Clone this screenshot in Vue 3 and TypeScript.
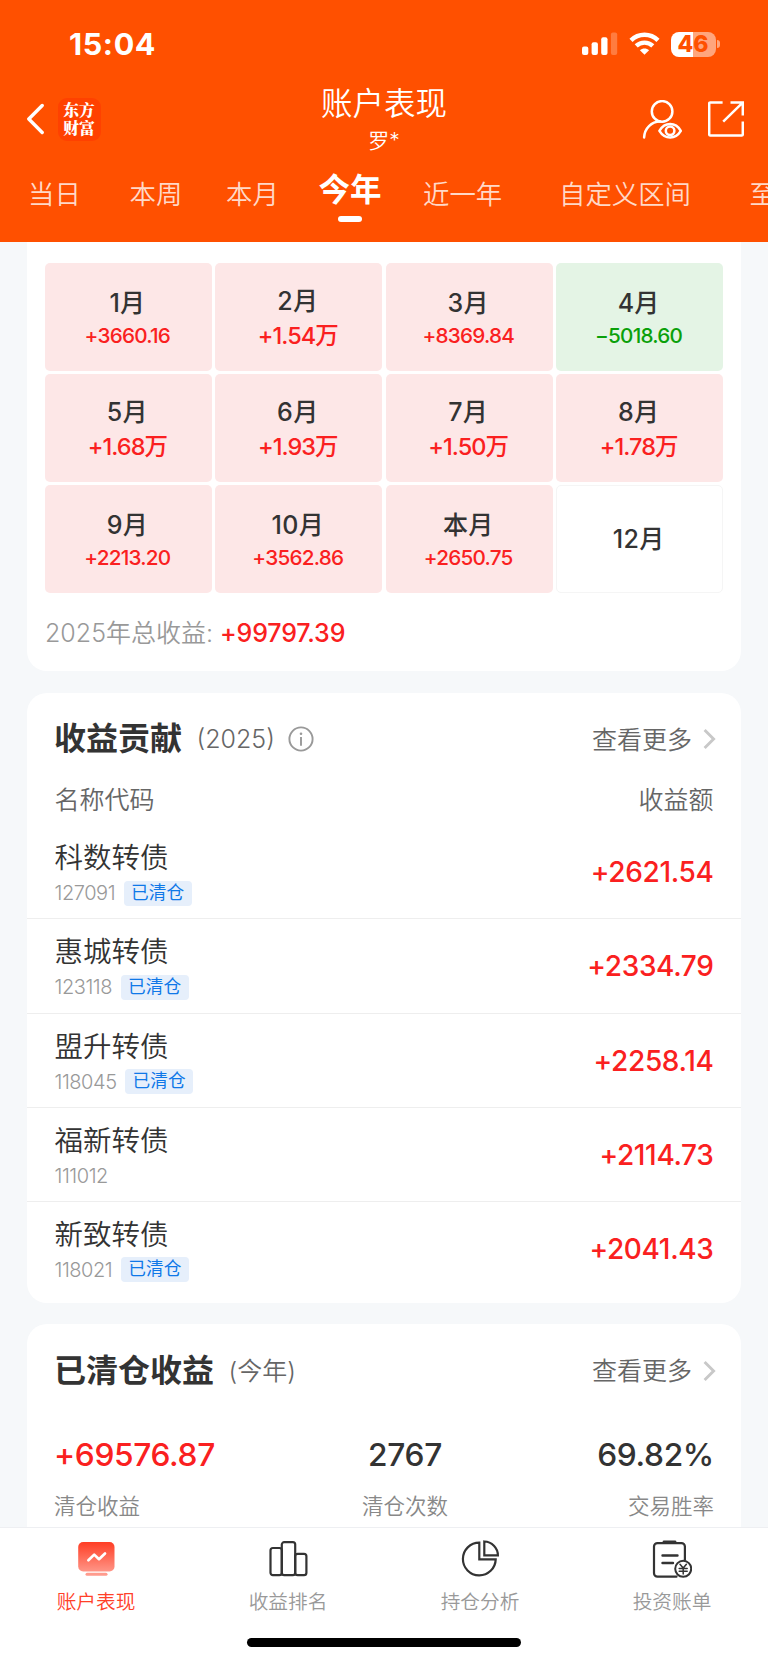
<script setup lang="ts">
interface Month { name: string; value?: string; tone: 'up' | 'down' | 'none'; large?: boolean }
interface Bond { name: string; code: string; cleared: boolean; gain: string }

const periods = ['当日', '本周', '本月', '今年', '近一年', '自定义区间', '至今']
const activePeriod = '今年'

const months: Month[] = [
  { name: '1月', value: '+3660.16', tone: 'up' },
  { name: '2月', value: '+1.54万', tone: 'up', large: true },
  { name: '3月', value: '+8369.84', tone: 'up' },
  { name: '4月', value: '−5018.60', tone: 'down' },
  { name: '5月', value: '+1.68万', tone: 'up', large: true },
  { name: '6月', value: '+1.93万', tone: 'up', large: true },
  { name: '7月', value: '+1.50万', tone: 'up', large: true },
  { name: '8月', value: '+1.78万', tone: 'up', large: true },
  { name: '9月', value: '+2213.20', tone: 'up' },
  { name: '10月', value: '+3562.86', tone: 'up' },
  { name: '本月', value: '+2650.75', tone: 'up' },
  { name: '12月', tone: 'none' },
]

const bonds: Bond[] = [
  { name: '科数转债', code: '127091', cleared: true, gain: '+2621.54' },
  { name: '惠城转债', code: '123118', cleared: true, gain: '+2334.79' },
  { name: '盟升转债', code: '118045', cleared: true, gain: '+2258.14' },
  { name: '福新转债', code: '111012', cleared: false, gain: '+2114.73' },
  { name: '新致转债', code: '118021', cleared: true, gain: '+2041.43' },
]
</script>

<template>
  <div class="screen">
    <header class="top">
      <div class="status">
        <span class="clock">15:04</span>
        <div class="signals">
          <svg width="36" height="24" viewBox="0 0 36 24" fill="#fff">
            <rect x="0" y="14.5" width="6.3" height="8.5" rx="2" />
            <rect x="9.6" y="10.3" width="6.3" height="12.7" rx="2" />
            <rect x="19.2" y="5.2" width="6.3" height="17.8" rx="2" />
            <rect x="28.9" y="0.6" width="6.3" height="22.4" rx="2" opacity="0.25" />
          </svg>
          <svg class="wifi" width="31" height="24" viewBox="0 0 31 24" fill="none" stroke="#fff" stroke-width="4.4">
            <path d="M2 8.4C9.5.9 21.5.9 29 8.4" />
            <path d="M7.2 13.9c4.6-4.4 12-4.4 16.6 0" />
            <path d="M15.5 22.8l-4.6-4.5c2.6-2.3 6.6-2.3 9.2 0z" fill="#fff" stroke="none" />
          </svg>
          <div class="battery"><span>46</span></div>
          <i class="nub"></i>
        </div>
      </div>
      <div class="nav">
        <div class="nav-left">
          <svg width="17" height="32" viewBox="0 0 17 32" fill="none" stroke="#fff" stroke-width="3.4" stroke-linecap="round" stroke-linejoin="round">
            <path d="M15.2 2.5L1.8 16l13.4 13.5" />
          </svg>
          <div class="logo"><span>东方</span><span>财富</span></div>
        </div>
        <div class="nav-title">
          <h1>账户表现</h1>
          <p>罗*</p>
        </div>
        <div class="nav-right">
          <svg width="40" height="40" viewBox="0 0 40 40" fill="none" stroke="#fff" stroke-width="2.5" stroke-linecap="round">
            <circle cx="20.1" cy="11.4" r="10.3" />
            <path d="M2.1 37.4C2.6 28.4 9.4 21.7 18 21.6" />
            <path d="M17.4 30.8c5.4-9 16.2-9 21.4 0c-5.2 8.8-16 8.8-21.4 0z" stroke-linejoin="round" />
            <circle cx="28.1" cy="30.8" r="4.3" />
          </svg>
          <svg width="36" height="36" viewBox="0 0 36 36" fill="none" stroke="#fff" stroke-width="2.5" stroke-linejoin="round">
            <path d="M14.6 1.4H2.2a1 1 0 0 0-1 1V33.4a1 1 0 0 0 1 1H33.8a1 1 0 0 0 1-1V20.5" />
            <path d="M22.5 1.4H34.8V14.5M34.4 1.8L15.2 20.7" stroke-linejoin="miter" />
          </svg>
        </div>
      </div>
      <nav class="periods">
        <span v-for="p in periods" :key="p" :class="{ active: p === activePeriod }">{{ p }}</span>
      </nav>
    </header>

    <main class="content">
      <section class="card calendar">
        <div class="months">
          <div v-for="m in months" :key="m.name" class="month" :class="[m.tone, { large: m.large }]">
            <b>{{ m.name }}</b>
            <span v-if="m.value">{{ m.value }}</span>
          </div>
        </div>
        <p class="total">2025年总收益: <strong>+99797.39</strong></p>
      </section>

      <section class="card contribution">
        <div class="card-head">
          <h2>收益贡献</h2>
          <span class="sub">(2025)</span>
          <svg class="info" width="26" height="26" viewBox="0 0 26 26" fill="none" stroke="#999" stroke-width="1.9">
            <circle cx="13" cy="13" r="11.6" />
            <path d="M13 11v8.7" />
            <circle cx="13" cy="7.8" r="1.3" fill="#999" stroke="none" />
          </svg>
          <span class="more">查看更多</span>
          <svg width="13" height="22" viewBox="0 0 13 22" fill="none" stroke="#c8c8c8" stroke-width="2.9">
            <path d="M1.6 2L10.6 11L1.6 20" />
          </svg>
        </div>
        <div class="columns"><span>名称代码</span><span>收益额</span></div>
        <ul class="bonds">
          <li v-for="b in bonds" :key="b.code">
            <div>
              <p class="bond-name">{{ b.name }}</p>
              <p class="bond-meta"><span class="code">{{ b.code }}</span><em v-if="b.cleared">已清仓</em></p>
            </div>
            <strong>{{ b.gain }}</strong>
          </li>
        </ul>
      </section>

      <section class="card cleared">
        <div class="card-head">
          <h2>已清仓收益</h2>
          <span class="sub han">(今年)</span>
          <span class="more">查看更多</span>
          <svg width="13" height="22" viewBox="0 0 13 22" fill="none" stroke="#c8c8c8" stroke-width="2.9">
            <path d="M1.6 2L10.6 11L1.6 20" />
          </svg>
        </div>
        <div class="stats">
          <div class="stat"><strong class="red">+69576.87</strong><span>清仓收益</span></div>
          <div class="stat mid"><strong>2767</strong><span>清仓次数</span></div>
          <div class="stat end"><strong>69.82%</strong><span>交易胜率</span></div>
        </div>
      </section>
    </main>

    <footer class="bottom">
      <div class="tabs">
        <div class="tab on">
          <svg width="40" height="40" viewBox="0 0 40 40" fill="none">
            <defs>
              <linearGradient id="tv" x1="0" y1="0" x2="0" y2="1">
                <stop offset="0" stop-color="#ff3d24" /><stop offset="1" stop-color="#ff9587" />
              </linearGradient>
            </defs>
            <rect x="2.2" y="3" width="36.3" height="29.5" rx="5" fill="url(#tv)" />
            <path d="M12.4 21.2L18.2 15.6L23 20.2L29 14.5" stroke="#fff" stroke-width="2.7" stroke-linecap="round" stroke-linejoin="round" />
            <rect x="9.5" y="33.8" width="22" height="3" rx="1.5" fill="#ff9b8d" />
          </svg>
          <span>账户表现</span>
        </div>
        <div class="tab">
          <svg width="40" height="40" viewBox="0 0 40 40" fill="none" stroke="#333" stroke-width="2.2">
            <rect x="2.5" y="9" width="11.3" height="27.2" rx="2.4" />
            <rect x="13.8" y="3.2" width="13.4" height="33" rx="2.4" />
            <rect x="27.2" y="14.8" width="11.2" height="21.4" rx="2.4" />
          </svg>
          <span>收益排名</span>
        </div>
        <div class="tab">
          <svg width="40" height="40" viewBox="0 0 40 40" fill="none" stroke="#333" stroke-width="2.2">
            <path d="M19.3 3.6A16.4 16.4 0 1 0 35.7 20.4H19.3z" />
            <path d="M24.3 2.5V16.4H37.9A14 14 0 0 0 24.3 2.5z" />
          </svg>
          <span>持仓分析</span>
        </div>
        <div class="tab">
          <svg width="40" height="40" viewBox="0 0 40 40" fill="none" stroke="#333" stroke-width="2.2" stroke-linecap="round">
            <path d="M24.5 37.7H5.5a3.5 3.5 0 0 1-3.5-3.5V7.600a3.500 3.500 0 0 1 3.500-3.500H29.400a3.500 3.500 0 0 1 3.500 3.500V21" />
            <path d="M12 2.9H23" stroke-width="2.9" />
            <path d="M10.5 16.5H25.5M10.5 24H21" stroke-width="2.4" />
            <circle cx="31.2" cy="29.8" r="8" stroke-width="2" />
            <path d="M28 25.2l3.2 3.8 3.2-3.8M31.2 29v6M27.2 29.4h8M27.2 32.2h8" stroke-width="1.5" />
          </svg>
          <span>投资账单</span>
        </div>
      </div>
      <div class="home"></div>
    </footer>
  </div>
</template>

<style>
body { margin: 0; background: #f6f8fa; }
</style>

<style scoped>
* { box-sizing: border-box; }
h1, h2, p, ul { margin: 0; padding: 0; font-weight: inherit; }
svg { display: block; flex: none; }

.screen {
  display: flex;
  flex-direction: column;
  width: 768px;
  height: 1662px;
  overflow: hidden;
  background: #f6f8fa;
  color: #333;
  font-family: Inter, "Noto Sans CJK SC", sans-serif;
  font-weight: 350;
}

.top { flex: none; height: 242.3px; background: #ff5000; color: #fff; overflow: hidden; }
.status { display: flex; justify-content: space-between; height: 88px; padding: 0 48px 0 69px; align-items: center; }
.clock { padding-bottom: 2px; font-size: 30.5px; font-weight: 750; letter-spacing: 0.6px; }
.signals { display: flex; align-items: center; }
.wifi { margin: 0 11px 0 10.5px; }
.battery {
  width: 45px; height: 25px; border-radius: 8px;
  background: linear-gradient(90deg, #fff 0 21.7px, #ffa57d 21.7px);
  color: #ff5000; font-size: 23px; line-height: 25px; font-weight: 800; text-align: center;
}
.nub { width: 3px; height: 8px; margin-left: 1.5px; border-radius: 0 4px 4px 0; background: #ffa57d; }

.nav { display: grid; grid-template-columns: 1fr 1fr 1fr; height: 74px; padding: 0 24px; }
.nav-left { display: flex; align-items: center; gap: 14px; height: 62px; padding-left: 2.5px; }
.logo {
  display: flex; flex-direction: column; justify-content: center; align-items: center;
  width: 43px; height: 43px; border-radius: 9px; background: #ff4100;
  font-family: "Noto Serif CJK SC", "Noto Sans CJK SC", serif; font-size: 15.8px; line-height: 18px; font-weight: 900;
}
.nav-title { text-align: center; }
.nav-title h1 { font-size: 31.5px; line-height: 32px; }
.nav-title p { font-size: 21px; line-height: 42px; }
.nav-right { display: flex; justify-content: flex-end; gap: 26px; padding-top: 11.5px; }
.nav-right svg:last-child { margin-top: 1px; }

.periods {
  display: grid; grid-template-columns: 101.5px 96.5px 92.5px 104.5px 136px 190.5px 60px;
  padding-left: 28px; line-height: 64px; font-size: 26.4px; white-space: nowrap; color: #ffd9c8;
}
.periods .active { width: 63px; color: #fff; font-size: 31.5px; line-height: 56px; font-weight: 700; }
.periods .active::after { content: ""; display: block; width: 23.5px; height: 6px; margin: -2px auto 0; border-radius: 3px; background: #fff; }

.content { flex: 1; min-height: 0; overflow: hidden; padding: 0 27px; }
.card { background: #fff; border-radius: 20px; }
.calendar { height: 428.7px; padding: 21px 18px 0; border-radius: 0 0 20px 20px; }
.months { display: grid; grid-template-columns: repeat(4, 1fr); grid-auto-rows: 107.4px; gap: 3.7px; }
.month { display: flex; flex-direction: column; justify-content: center; align-items: center; padding: 1.5px 2px 0 0; border-radius: 5px; }
.month b { font-size: 25px; line-height: 35px; font-weight: 500; letter-spacing: 0.3px; }
.month span { font-size: 20.7px; line-height: 29px; font-weight: 500; letter-spacing: -0.75px; }
.month.large span { font-size: 23.5px; line-height: 33px; letter-spacing: -0.95px; }
.up { background: #fde7e7; }
.up span, .red { color: #fa2020; }
.down { background: #e4f4e5; }
.down span { color: #0aa00a; }
.none { border: 1px solid #f5f5f5; }
.total { font-size: 25px; line-height: 81px; color: #999; }
.total strong { color: #fa2020; font-weight: 500; letter-spacing: -0.15px; }

.contribution { height: 610.3px; margin-top: 21.7px; }
.card-head { display: flex; align-items: center; height: 93px; padding: 0 25px 0 27px; }
.card-head h2 { font-size: 32px; font-weight: 700; line-height: 48px; }
.sub { margin-left: 14.5px; font-size: 25px; color: #666; }
.han { padding-bottom: 4px; }
.info { margin-left: 13.5px; }
.more { margin: 0 11px 0 auto; padding-bottom: 3px; font-size: 25px; color: #666; }
.columns { display: flex; justify-content: space-between; padding: 0 27.5px; font-size: 25px; line-height: 28px; color: #666; }
.bonds { padding-top: 11.5px; list-style: none; }
.bonds li { display: flex; justify-content: space-between; height: 94.2px; padding: 13px 27.5px 0; border-bottom: 1px solid #eee; }
.bonds li:last-child { border-bottom: 0; }
.bond-name { font-size: 28.5px; line-height: 39px; }
.bond-meta { display: flex; align-items: center; gap: 8.5px; height: 32px; font-size: 20px; color: #999; }
.code { letter-spacing: -0.45px; }
.bond-meta em { height: 25px; padding: 0 7.5px; border-radius: 4px; background: #e6effb; color: #0f78e8; font-size: 17.7px; line-height: 24px; font-style: normal; font-weight: 400; }
.bonds strong { color: #fa2020; font-size: 28px; line-height: 68px; font-weight: 550; letter-spacing: -0.35px; }

.cleared { height: 300px; margin-top: 21.3px; }
.stats { display: grid; grid-template-columns: 1fr 1fr 1fr; padding: 14px 27px 0; }
.stat { display: flex; flex-direction: column; }
.stat strong { font-size: 31.7px; line-height: 48px; font-weight: 550; letter-spacing: -0.35px; }
.stat span { font-size: 21.5px; line-height: 54px; color: #888; }
.mid { align-items: center; padding-left: 42px; }
.end { align-items: flex-end; }

.bottom { flex: none; height: 135.5px; border-top: 1.5px solid #eeeff2; background: #fff; }
.tabs { display: grid; grid-template-columns: repeat(4, 1fr); height: 109px; padding-top: 11px; }
.tab { display: flex; flex-direction: column; align-items: center; font-size: 19.7px; line-height: 46px; color: #999; }
.tab.on { color: #ff4028; }
.home { width: 274.5px; height: 9.3px; margin: 1px auto 0; border-radius: 5px; background: #000; }
</style>
